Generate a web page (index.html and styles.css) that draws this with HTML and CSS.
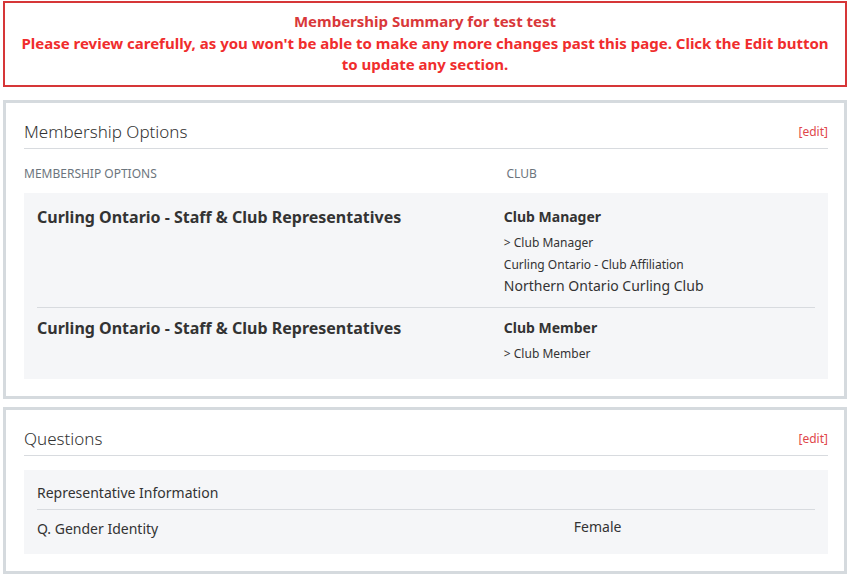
FILE: index.html
```html
<!DOCTYPE html>
<html>
<head>
    <title>Membership Summary</title>
    <link rel="stylesheet" href="styles.css">
</head>
<body>
    <div class="page">
        <div class="alert">
            <div class="alert-title">Membership Summary for test test</div>
            <div class="alert-text">Please review carefully, as you won't be able to make any more changes past this page. Click the Edit button to update any section.</div>
        </div>

        <div class="card">
            <div class="card-head">
                <span class="card-title">Membership Options</span>
                <a class="edit" href="#">[edit]</a>
            </div>
            <div class="cols-head">
                <div>Membership Options</div>
                <div>Club</div>
            </div>
            <div class="box">
                <div class="option">
                    <div class="option-name">Curling Ontario - Staff &amp; Club Representatives</div>
                    <div class="option-club">
                        <div class="role">Club Manager</div>
                        <div class="small">&gt; Club Manager</div>
                        <div class="small">Curling Ontario - Club Affiliation</div>
                        <div class="club-name">Northern Ontario Curling Club</div>
                    </div>
                </div>
                <div class="option">
                    <div class="option-name">Curling Ontario - Staff &amp; Club Representatives</div>
                    <div class="option-club">
                        <div class="role">Club Member</div>
                        <div class="small">&gt; Club Member</div>
                    </div>
                </div>
            </div>
        </div>

        <div class="card">
            <div class="card-head">
                <span class="card-title">Questions</span>
                <a class="edit" href="#">[edit]</a>
            </div>
            <div class="box questions">
                <div class="q-group">Representative Information</div>
                <div class="q-row">
                    <div class="q-label">Q. Gender Identity</div>
                    <div class="q-answer">Female</div>
                </div>
            </div>
        </div>
    </div>
</body>
</html>
```

FILE: styles.css
```css
body {
    margin: 0;
    background-color: white;
    font-family: "Noto Sans", "Open Sans", sans-serif;
    color: #333;
}
.page {
    padding: 1px 0 0 3px;
}
.alert {
    border: 2px solid #d63638;
    padding: 8px 10px 9px;
    margin-bottom: 13px;
    text-align: center;
    font-weight: bold;
    font-size: 15px;
    line-height: 21.5px;
}
.alert-title {
    color: #d9383a;
}
.alert-text {
    color: #f02d2d;
}
.card {
    border: 3px solid #d5dade;
    margin-bottom: 8px;
    padding: 17px 16px 17px 18px;
}
.card-head {
    display: flex;
    justify-content: space-between;
    align-items: center;
    border-bottom: 1px solid #d8dbdf;
    padding-bottom: 4px;
}
.card-title {
    font-size: 17px;
    font-weight: 300;
    line-height: 24px;
}
.edit {
    color: #e0474a;
    font-size: 12px;
    text-decoration: none;
}
.cols-head {
    display: grid;
    grid-template-columns: 60% 40%;
    font-size: 12px;
    color: #6c757d;
    text-transform: uppercase;
    padding: 16px 0 11px;
}
.box {
    background-color: #f5f6f8;
    padding: 4px 13px 3px;
}
.option {
    display: grid;
    grid-template-columns: 60% 40%;
    padding: 9px 0 11px;
}
.option + .option {
    border-top: 1px solid #d8dbdf;
}
.option-name {
    font-size: 16px;
    font-weight: bold;
    line-height: 22px;
}
.role {
    font-size: 14px;
    font-weight: bold;
    line-height: 22px;
    margin-bottom: 4px;
}
.small {
    font-size: 12px;
    line-height: 22px;
}
.club-name {
    font-size: 14px;
    line-height: 20px;
}
.questions {
    margin-top: 14px;
    padding: 0 13px;
}
.q-group {
    font-size: 14px;
    line-height: 20px;
    padding: 13px 0 6px;
    border-bottom: 1px solid #d8dbdf;
}
.q-row {
    display: grid;
    grid-template-columns: 69% 31%;
    font-size: 14px;
    line-height: 20px;
    padding: 7px 0 15px;
}
.q-label {
    padding-top: 2px;
}
```
